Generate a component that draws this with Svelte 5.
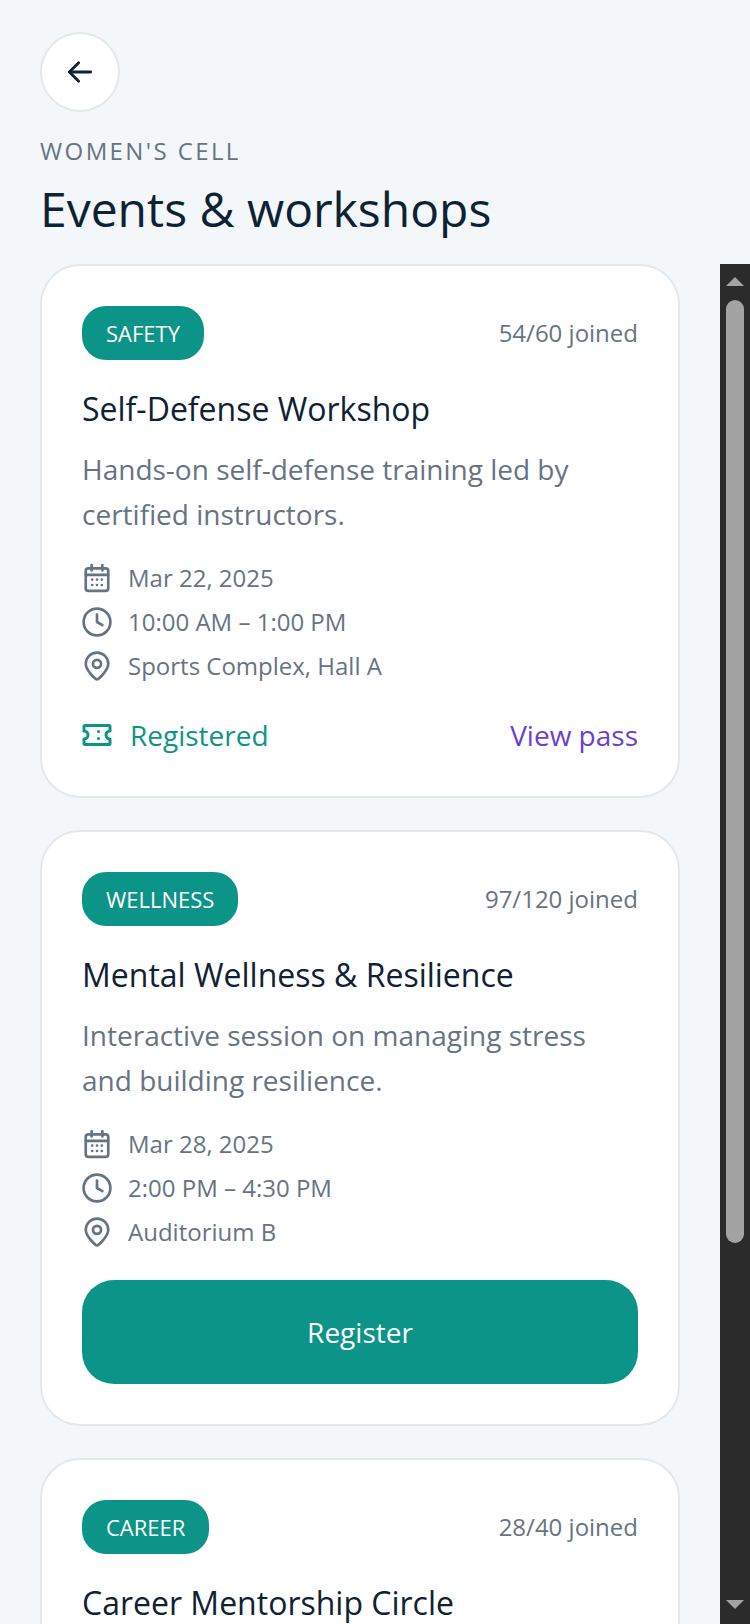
<script>
  const events = [
    {
      tag: 'SAFETY',
      joined: '54/60 joined',
      title: 'Self-Defense Workshop',
      desc: 'Hands-on self-defense training led by certified instructors.',
      date: 'Mar 22, 2025',
      time: '10:00 AM – 1:00 PM',
      place: 'Sports Complex, Hall A',
      registered: true
    },
    {
      tag: 'WELLNESS',
      joined: '97/120 joined',
      title: 'Mental Wellness & Resilience',
      desc: 'Interactive session on managing stress and building resilience.',
      date: 'Mar 28, 2025',
      time: '2:00 PM – 4:30 PM',
      place: 'Auditorium B',
      registered: false
    },
    {
      // the rest of this card is below the fold
      tag: 'CAREER',
      joined: '28/40 joined',
      title: 'Career Mentorship Circle'
    }
  ];
</script>

<div class="page">
  <header class="head">
    <button class="back" aria-label="Back">
      <svg width="32" height="32" viewBox="0 0 24 24" fill="none" stroke="currentColor" stroke-width="2.1" stroke-linecap="round" stroke-linejoin="round">
        <path d="M20 12H4.500" />
        <path d="M11 5l-7 7 7 7" />
      </svg>
    </button>
    <div class="eyebrow">WOMEN'S CELL</div>
    <h1>Events &amp; workshops</h1>
  </header>

  <div class="body">
    <div class="list">
      {#each events as ev}
        <article class="card">
          <div class="top">
            <span class="tag">{ev.tag}</span>
            <span class="joined">{ev.joined}</span>
          </div>
          <h2>{ev.title}</h2>
          {#if ev.desc}
            <p class="desc">{ev.desc}</p>
            <ul class="meta">
              <li>
                <svg class="ico" viewBox="0 0 28 28" fill="none" stroke="currentColor" stroke-width="2.500" stroke-linecap="round" stroke-linejoin="round">
                  <rect x="3.500" y="5" width="21" height="21" rx="2.500" />
                  <path d="M3.500 11h21M9 2v5M19 2v5" />
                  <path d="M9.500 15.500h.01M14 15.500h.01M18.500 15.500h.01M9.500 20.500h.01M14 20.500h.01M18.500 20.500h.01" />
                </svg>
                <span>{ev.date}</span>
              </li>
              <li>
                <svg class="ico" viewBox="0 0 28 28" fill="none" stroke="currentColor" stroke-width="2.500" stroke-linecap="round" stroke-linejoin="round">
                  <circle cx="14" cy="14" r="12.500" />
                  <path d="M14 7v7l5 3" />
                </svg>
                <span>{ev.time}</span>
              </li>
              <li>
                <svg class="ico" viewBox="0 0 28 28" fill="none" stroke="currentColor" stroke-width="2.500" stroke-linecap="round" stroke-linejoin="round">
                  <path d="M14 26.500c-1 0-10.500-8-10.500-14.500a10.500 10.500 0 0 1 21 0c0 6.500-9.500 14.500-10.500 14.500z" />
                  <circle cx="14" cy="12" r="3.800" />
                </svg>
                <span>{ev.place}</span>
              </li>
            </ul>
            {#if ev.registered}
              <div class="status">
                <span class="done">
                  <svg width="30" height="24" viewBox="0 0 30 24" fill="none" stroke="currentColor" stroke-width="3" stroke-linecap="round" stroke-linejoin="round">
                    <path d="M3 2.500h24a1 1 0 0 1 1 1v4.500a4 4 0 0 0 0 8v4.500a1 1 0 0 1-1 1H3a1 1 0 0 1-1-1V16a4 4 0 0 0 0-8V3.500a1 1 0 0 1 1-1z" />
                    <path d="M16.500 8.500h.01M16.500 15.500h.01" />
                  </svg>
                  Registered
                </span>
                <span class="pass">View pass</span>
              </div>
            {:else}
              <button class="register">Register</button>
            {/if}
          {/if}
        </article>
      {/each}
    </div>

    <div class="scrollbar">
      <span class="arrow up"></span>
      <span class="thumb"></span>
      <span class="arrow down"></span>
    </div>
  </div>
</div>

<style>
  :global(body) {
    margin: 0;
    background: #f3f7fa;
  }

  .page {
    width: 750px;
    height: 1624px;
    display: flex;
    flex-direction: column;
    overflow: hidden;
    font-family: "Open Sans", sans-serif;
    background: #f3f7fa;
    color: #0f2233;
  }

  .head {
    padding: 32px 40px 0 40px;
    height: 264px;
    box-sizing: border-box;
    flex: none;
  }

  .back {
    width: 80px;
    height: 80px;
    padding: 0;
    border-radius: 50%;
    border: 2px solid #e3e8ed;
    background: #fff;
    color: #0f2233;
    display: flex;
    align-items: center;
    justify-content: center;
  }

  .eyebrow {
    margin-top: 24px;
    font-size: 24px;
    line-height: 30px;
    letter-spacing: 2.400px;
    color: #667482;
  }

  h1 {
    margin: 13px 0 0;
    font-size: 48px;
    line-height: 60px;
    font-weight: 400;
    color: #0f2233;
  }

  .body {
    flex: 1;
    min-height: 0;
    display: flex;
  }

  .list {
    flex: 1;
    min-width: 0;
    padding: 0 40px;
    display: flex;
    flex-direction: column;
    gap: 32px;
  }

  .card {
    flex: none;
    width: 640px;
    box-sizing: border-box;
    background: #fff;
    border: 2px solid #e3e8ed;
    border-radius: 40px;
    padding: 40px;
  }

  .top {
    display: flex;
    align-items: center;
    justify-content: space-between;
  }

  .tag {
    background: #0d9488;
    color: #fff;
    font-size: 22px;
    line-height: 54px;
    padding: 0 24px;
    border-radius: 24px;
  }

  .joined {
    font-size: 24px;
    line-height: 32px;
    margin-top: -1px;
    color: #667482;
  }

  h2 {
    margin: 27px 0 0;
    font-size: 32px;
    line-height: 44px;
    font-weight: 400;
    color: #0f2233;
  }

  .desc {
    margin: 16px 0 0;
    font-size: 28px;
    line-height: 45px;
    color: #667482;
  }

  .meta {
    list-style: none;
    margin: 24px 0 0;
    padding: 0;
    display: flex;
    flex-direction: column;
    gap: 10px;
    color: #667482;
    font-size: 24px;
    line-height: 34px;
  }

  .meta li {
    display: flex;
    align-items: center;
    gap: 16px;
    height: 34px;
  }

  .ico {
    flex: none;
    width: 30px;
    height: 30px;
  }

  .status {
    margin-top: 33px;
    padding-bottom: 2px;
    display: flex;
    align-items: center;
    justify-content: space-between;
    font-size: 28px;
    line-height: 38px;
  }

  .done {
    display: flex;
    align-items: center;
    gap: 18px;
    color: #0d9488;
  }

  .pass {
    color: #6b3fd4;
  }

  .register {
    display: block;
    width: 100%;
    height: 104px;
    margin-top: 31px;
    border: none;
    border-radius: 32px;
    background: #0d9488;
    color: #fff;
    font-family: inherit;
    font-size: 28px;
  }

  .scrollbar {
    flex: none;
    width: 30px;
    background: #2b2b2b;
    display: flex;
    flex-direction: column;
    align-items: center;
  }

  .arrow {
    width: 0;
    height: 0;
    border-left: 9px solid transparent;
    border-right: 9px solid transparent;
    flex: none;
  }

  .up {
    margin-top: 13px;
    border-bottom: 9px solid #a3a3a3;
  }

  .thumb {
    width: 18px;
    height: 943px;
    margin-top: 14px;
    background: #a3a3a3;
    border-radius: 9px;
    flex: none;
  }

  .down {
    margin-top: auto;
    margin-bottom: 15px;
    border-top: 9px solid #a3a3a3;
  }
</style>
